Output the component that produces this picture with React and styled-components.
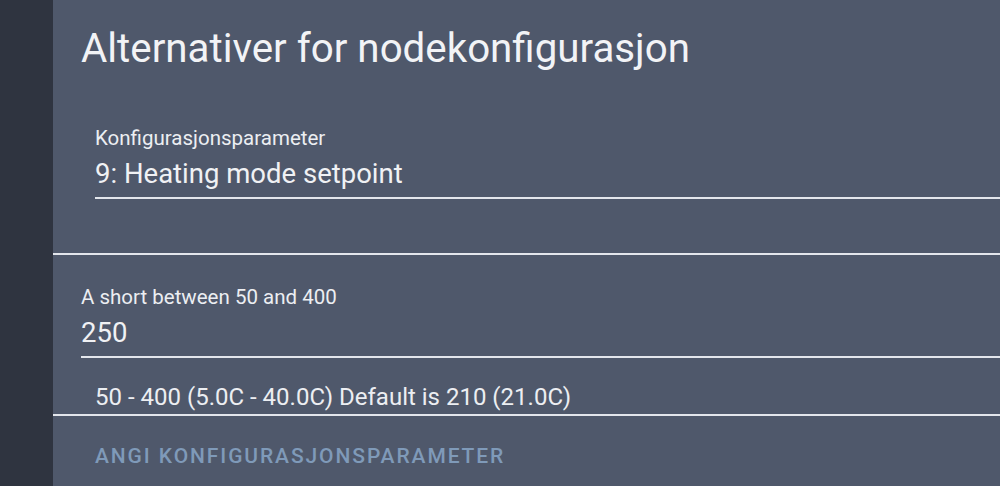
import React from 'react';
import styled, { createGlobalStyle } from 'styled-components';

const GlobalStyle = createGlobalStyle`
  html, body {
    margin: 0;
    padding: 0;
    background: #4f586b;
    font-family: Roboto, "Noto Sans", sans-serif;
    overflow: hidden;
  }
`;

const line = '#e3e6ec';

const Page = styled.div`
  display: flex;
  width: 1000px;
  height: 486px;
  overflow: hidden;
`;

const Sidebar = styled.div`
  width: 53px;
  flex-shrink: 0;
  background: #2f3440;
`;

const Main = styled.div`
  flex: 1;
  background: #4f586b;
  color: #eceef2;
  display: flex;
  flex-direction: column;
`;

const Title = styled.h1`
  margin: 0;
  padding: 25px 0 0 28px;
  font-size: 40.3px;
  font-weight: 400;
  line-height: 48px;
  color: #f2f3f6;
`;

const Section = styled.div`
  padding: ${({ $pad }) => $pad};
  border-bottom: ${({ $divider }) => ($divider ? `2px solid ${line}` : 'none')};
`;

const Field = styled.div`
  border-bottom: 2px solid ${line};
  margin-left: ${({ $indent }) => $indent}px;
  padding-bottom: 7px;
`;

const Label = styled.div`
  font-size: 20.5px;
  line-height: 24px;
  color: #eceef2;
`;

const Value = styled.div`
  margin-top: 8px;
  font-size: 27.5px;
  line-height: 32px;
  color: #f0f1f4;
`;

const Hint = styled.div`
  margin-top: 25px;
  padding: 0 0 3px 42px;
  font-size: 24px;
  line-height: 28px;
  color: #eceef2;
  border-bottom: 2px solid ${line};
`;

const Action = styled.button`
  align-self: flex-start;
  margin: 28px 0 0 42px;
  padding: 0;
  border: none;
  background: none;
  font-family: Roboto, "Noto Sans", sans-serif;
  font-size: 21px;
  line-height: 24px;
  font-weight: 500;
  letter-spacing: 1.9px;
  color: #7f9ab9;
  text-transform: uppercase;
`;

export default function App() {
  return (
    <Page>
      <GlobalStyle />
      <Sidebar />
      <Main>
        <Title>Alternativer for nodekonfigurasjon</Title>
        <Section $pad="53px 0 54px 42px" $divider>
          <Field $indent={0}>
            <Label>Konfigurasjonsparameter</Label>
            <Value>9: Heating mode setpoint</Value>
          </Field>
        </Section>
        <Section $pad="30px 0 0 0">
          <Field $indent={28}>
            <Label>A short between 50 and 400</Label>
            <Value>250</Value>
          </Field>
        </Section>
        <Hint>50 - 400 (5.0C - 40.0C) Default is 210 (21.0C)</Hint>
        <Action>Angi konfigurasjonsparameter</Action>
      </Main>
    </Page>
  );
}
